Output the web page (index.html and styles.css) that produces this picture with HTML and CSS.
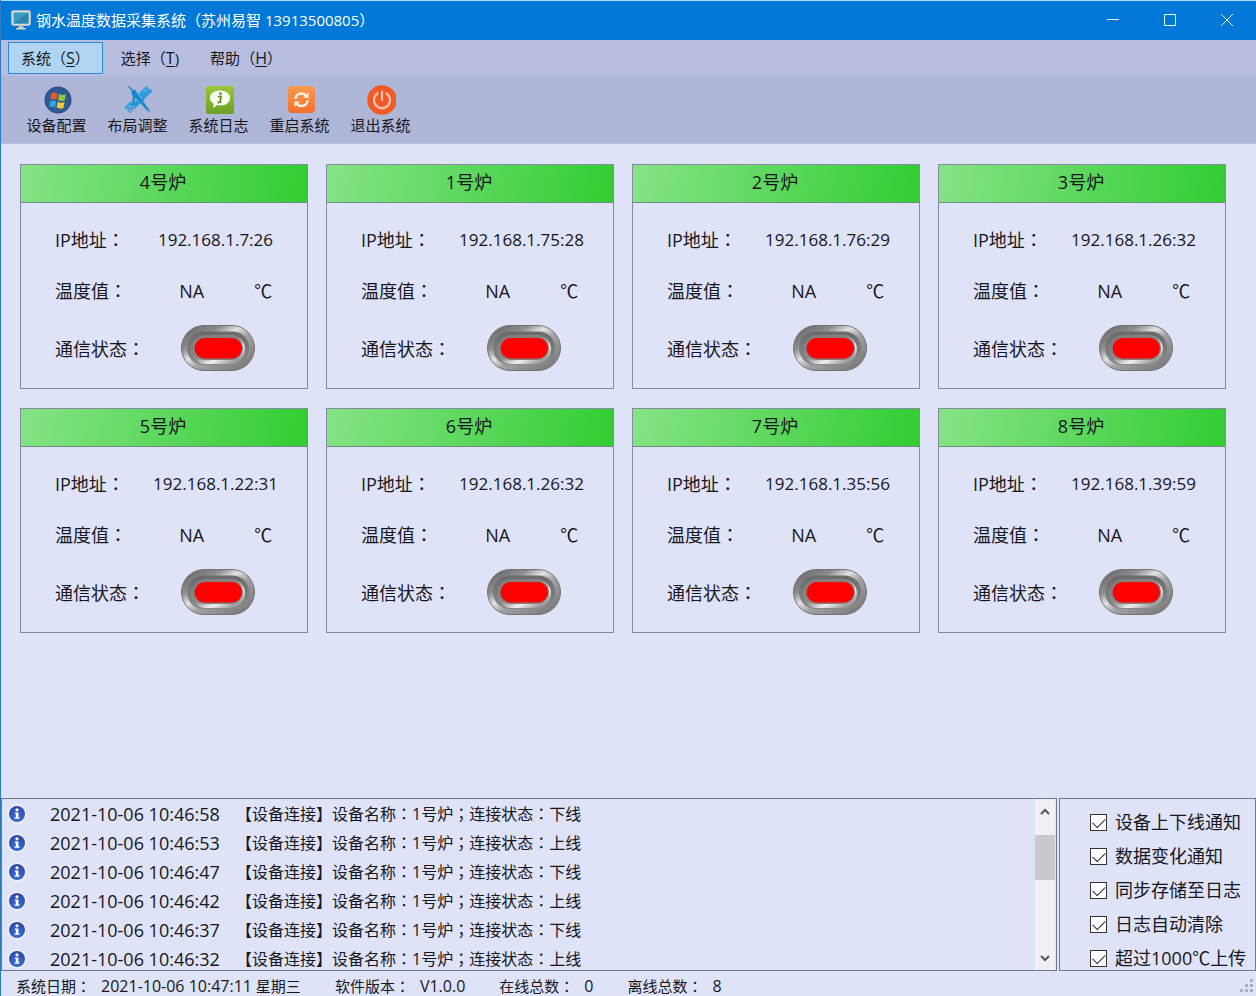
FILE: index.html
```html
<!DOCTYPE html>
<html lang="zh-CN">
<head>
<meta charset="utf-8">
<meta name="viewport" content="width=device-width, initial-scale=1">
<title>钢水温度数据采集系统</title>
<link rel="stylesheet" href="styles.css">
</head>
<body>
<svg class="defs" aria-hidden="true">
  <defs>
    <linearGradient id="rim" x1="0" y1="0" x2="1" y2="1">
      <stop offset="0" stop-color="#5c5c5c"/><stop offset="0.28" stop-color="#8e8e8e"/><stop offset="0.42" stop-color="#e2e2e2"/><stop offset="0.56" stop-color="#a2a2a2"/><stop offset="1" stop-color="#707070"/>
    </linearGradient>
    <linearGradient id="well" x1="0" y1="0" x2="0" y2="1">
      <stop offset="0" stop-color="#6a6a6a"/><stop offset="1" stop-color="#8a8a8a"/>
    </linearGradient>
    <linearGradient id="bevel" x1="0" y1="0" x2="1" y2="1">
      <stop offset="0" stop-color="#777"/><stop offset="0.45" stop-color="#8c8c8c"/><stop offset="0.66" stop-color="#f0f0f0"/><stop offset="0.85" stop-color="#a0a0a0"/><stop offset="1" stop-color="#777"/>
    </linearGradient>
    <linearGradient id="green" x1="0" y1="0" x2="0" y2="1">
      <stop offset="0" stop-color="#9ac93c"/><stop offset="1" stop-color="#6ba024"/>
    </linearGradient>
    <linearGradient id="orange" x1="0" y1="0" x2="0" y2="1">
      <stop offset="0" stop-color="#fb9a52"/><stop offset="1" stop-color="#f3702c"/>
    </linearGradient>
    <radialGradient id="blue" cx="0.5" cy="0.75" r="0.7">
      <stop offset="0" stop-color="#3a72dc"/><stop offset="1" stop-color="#3048a4"/>
    </radialGradient>
  </defs>
  <symbol id="led" viewBox="0 0 74 46">
    <rect x="0.5" y="0.5" width="73" height="45" rx="22.5" fill="url(#rim)" stroke="#747474"/>
    <rect x="6" y="6.5" width="62" height="33.5" rx="16.5" fill="url(#well)"/>
    <rect x="10" y="10" width="54" height="29" rx="14.5" fill="url(#bevel)"/>
    <rect x="12" y="11" width="50" height="24" rx="12" fill="#858080"/>
    <rect x="13.5" y="13" width="47.5" height="20.5" rx="10.2" fill="#fe0000"/>
  </symbol>
  <symbol id="info" viewBox="0 0 20 20">
    <circle cx="10" cy="10" r="9.5" fill="#f2f5fd"/>
    <circle cx="10" cy="10" r="8" fill="url(#blue)"/>
    <circle cx="10" cy="5.8" r="1.6" fill="#fff"/>
    <path d="M7.8 8.5h3.6v5h1.1v1.3H7.6v-1.3h1.2V9.8H7.8z" fill="#fff"/>
  </symbol>
</svg>

<header class="titlebar">
  <svg class="app-icon" viewBox="0 0 20 20" aria-hidden="true">
    <rect x="0.5" y="0.5" width="19" height="15" rx="2" fill="#d3dadd" stroke="#aebbc3"/>
    <rect x="2.5" y="2.5" width="15" height="11" fill="#3c9bc4"/>
    <path d="M2.5 13.500 17.5 2.500v11z" fill="#2d86b0"/>
    <path d="M8 16h4l1 2H7z" fill="#c9c2a8"/><rect x="5" y="18" width="10" height="1.600" rx="0.8" fill="#dedac8"/>
  </svg>
  <h1 class="title">钢水温度数据采集系统<span class="pn">（</span>苏州易智 13913500805<span class="pn">）</span></h1>
  <div class="window-buttons">
    <button type="button" aria-label="最小化"><svg viewBox="0 0 12 12"><path d="M0 5.500h12"/></svg></button>
    <button type="button" aria-label="最大化"><svg viewBox="0 0 12 12"><path d="M0.500 0.500h11v11h-11z"/></svg></button>
    <button type="button" aria-label="关闭"><svg viewBox="0 0 12 12"><path d="M0 0l12 12M12 0L0 12"/></svg></button>
  </div>
</header>

<nav class="menu">
  <button type="button" class="active">系统<span class="pn">（</span><u>S</u><span class="pn">）</span></button>
  <button type="button">选择<span class="pn">（</span><u>T</u>)</button>
  <button type="button">帮助<span class="pn">（</span><u>H</u><span class="pn">）</span></button>
</nav>

<div class="toolbar" role="toolbar">
  <button type="button">
    <svg viewBox="0 0 30 30" aria-hidden="true">
      <circle cx="16" cy="15" r="13.500" fill="#2b4f86"/><circle cx="16" cy="15" r="12" fill="#2d5c94"/>
      <path d="M9.500 8.300c2.200-1 4.200-.9 6 .3l-1 6.200c-1.900-1-3.900-1.100-6-.2z" fill="#ef5a2c"/>
      <path d="M17 9c2.300 1.200 4.500 1.100 7 .2l-1.200 6.300c-2.300.8-4.500.7-6.800-.4z" fill="#8cc63c"/>
      <path d="M8.200 16.200c2.200-.9 4.100-.7 6 .2l-1 5.800c-1.900-1-3.800-1-6-.2z" fill="#2fa5dd"/>
      <path d="M15.700 16.800c2.300 1 4.500 1.100 6.900.3l-1.200 6c-2.300.9-4.400.6-6.700-.5z" fill="#fcc630"/>
    </svg>
    <span>设备配置</span>
  </button>
  <button type="button">
    <svg viewBox="0 0 30 30" aria-hidden="true">
      <path d="M1.300 22.500 23.500 0.800l6 5.300L7 28.500z" fill="#2e9bdf"/>
      <path d="M21 4.500l2.500 2.500M24 2.500l2 2M8 18l3 3M5.500 20.500l2 2M3.500 23l2.500 2.500" stroke="#a9cdea" stroke-width="1"/>
      <path d="M4 1l2-.5 3.500 3.800 3.300.5 2.500 4.200 11 15.500 1.500 3.700-3.500-2.200L12.500 13.500 8.500 28l-1.500.8L9.500 11.500 8 8.500l.2-2.500z" fill="#1788cc" stroke="#aeb8db" stroke-width="0.800"/>
      <path d="M8 19.500c5-.3 9-2 13-5" fill="none" stroke="#1e90d2" stroke-width="2"/>
    </svg>
    <span>布局调整</span>
  </button>
  <button type="button">
    <svg viewBox="0 0 30 30" aria-hidden="true">
      <rect x="2" y="1" width="28" height="28" rx="2" fill="url(#green)"/>
      <path d="M16 5.500c5.800 0 10 3 10 7.500s-4 7.500-9.500 7.500c-1.200 0-2.300-.1-3.200-.4L9 23l.8-4.200C7.300 17.400 6 15.400 6 13c0-4.500 4.200-7.500 10-7.500z" fill="#f8fbef"/>
      <circle cx="16.500" cy="8.700" r="1.400" fill="#67932f"/>
      <path d="M13.800 11.700h3.300l-1.200 5.300h1.500M13.500 17.500h2" fill="none" stroke="#67932f" stroke-width="1.800"/>
    </svg>
    <span>系统日志</span>
  </button>
  <button type="button">
    <svg viewBox="0 0 30 30" aria-hidden="true">
      <rect x="3" y="1" width="27" height="27" rx="4" fill="url(#orange)"/>
      <path d="M10.500 14c.3-3.500 3-5.500 6-5.500 2 0 3.700.8 4.700 2.200M22.500 15.500c-.3 3.500-3 5.500-6 5.500-2 0-3.700-.8-4.700-2.200" fill="none" stroke="#fff3e5" stroke-width="2.500"/>
      <path d="M23.500 7.500V13H18zM9.500 22v-5.500H15z" fill="#fff3e5"/>
    </svg>
    <span>重启系统</span>
  </button>
  <button type="button">
    <svg viewBox="0 0 30 30" aria-hidden="true">
      <circle cx="16" cy="15" r="14.800" fill="#f15a24"/>
      <path d="M11.500 8.500a8 8 0 1 0 9 0" fill="none" stroke="#f8c3af" stroke-width="2.200" stroke-linecap="round"/>
      <path d="M16 6.500v8.500" stroke="#f8c3af" stroke-width="2.200" stroke-linecap="round"/>
    </svg>
    <span>退出系统</span>
  </button>
</div>

<main class="furnaces">
  <section class="card">
    <h2>4号炉</h2>
    <dl>
      <dt>IP地址<span class="pn">：</span></dt><dd class="wide">192.168.1.7:26</dd>
      <dt>温度值<span class="pn">：</span></dt><dd>NA</dd><dd class="unit">℃</dd>
      <dt>通信状态<span class="pn">：</span></dt><dd class="wide lamp"><svg class="led" role="img" aria-label="离线"><use href="#led"/></svg></dd>
    </dl>
  </section>
  <section class="card">
    <h2>1号炉</h2>
    <dl>
      <dt>IP地址<span class="pn">：</span></dt><dd class="wide">192.168.1.75:28</dd>
      <dt>温度值<span class="pn">：</span></dt><dd>NA</dd><dd class="unit">℃</dd>
      <dt>通信状态<span class="pn">：</span></dt><dd class="wide lamp"><svg class="led" role="img" aria-label="离线"><use href="#led"/></svg></dd>
    </dl>
  </section>
  <section class="card">
    <h2>2号炉</h2>
    <dl>
      <dt>IP地址<span class="pn">：</span></dt><dd class="wide">192.168.1.76:29</dd>
      <dt>温度值<span class="pn">：</span></dt><dd>NA</dd><dd class="unit">℃</dd>
      <dt>通信状态<span class="pn">：</span></dt><dd class="wide lamp"><svg class="led" role="img" aria-label="离线"><use href="#led"/></svg></dd>
    </dl>
  </section>
  <section class="card">
    <h2>3号炉</h2>
    <dl>
      <dt>IP地址<span class="pn">：</span></dt><dd class="wide">192.168.1.26:32</dd>
      <dt>温度值<span class="pn">：</span></dt><dd>NA</dd><dd class="unit">℃</dd>
      <dt>通信状态<span class="pn">：</span></dt><dd class="wide lamp"><svg class="led" role="img" aria-label="离线"><use href="#led"/></svg></dd>
    </dl>
  </section>
  <section class="card">
    <h2>5号炉</h2>
    <dl>
      <dt>IP地址<span class="pn">：</span></dt><dd class="wide">192.168.1.22:31</dd>
      <dt>温度值<span class="pn">：</span></dt><dd>NA</dd><dd class="unit">℃</dd>
      <dt>通信状态<span class="pn">：</span></dt><dd class="wide lamp"><svg class="led" role="img" aria-label="离线"><use href="#led"/></svg></dd>
    </dl>
  </section>
  <section class="card">
    <h2>6号炉</h2>
    <dl>
      <dt>IP地址<span class="pn">：</span></dt><dd class="wide">192.168.1.26:32</dd>
      <dt>温度值<span class="pn">：</span></dt><dd>NA</dd><dd class="unit">℃</dd>
      <dt>通信状态<span class="pn">：</span></dt><dd class="wide lamp"><svg class="led" role="img" aria-label="离线"><use href="#led"/></svg></dd>
    </dl>
  </section>
  <section class="card">
    <h2>7号炉</h2>
    <dl>
      <dt>IP地址<span class="pn">：</span></dt><dd class="wide">192.168.1.35:56</dd>
      <dt>温度值<span class="pn">：</span></dt><dd>NA</dd><dd class="unit">℃</dd>
      <dt>通信状态<span class="pn">：</span></dt><dd class="wide lamp"><svg class="led" role="img" aria-label="离线"><use href="#led"/></svg></dd>
    </dl>
  </section>
  <section class="card">
    <h2>8号炉</h2>
    <dl>
      <dt>IP地址<span class="pn">：</span></dt><dd class="wide">192.168.1.39:59</dd>
      <dt>温度值<span class="pn">：</span></dt><dd>NA</dd><dd class="unit">℃</dd>
      <dt>通信状态<span class="pn">：</span></dt><dd class="wide lamp"><svg class="led" role="img" aria-label="离线"><use href="#led"/></svg></dd>
    </dl>
  </section>
</main>

<div class="bottom">
  <div class="log">
    <ul>
      <li><svg aria-hidden="true"><use href="#info"/></svg><time>2021-10-06 10:46:58</time><span>【设备连接】设备名称<span class="pn">：</span>1号炉<span class="pn">；</span>连接状态<span class="pn">：</span>下线</span></li>
      <li><svg aria-hidden="true"><use href="#info"/></svg><time>2021-10-06 10:46:53</time><span>【设备连接】设备名称<span class="pn">：</span>1号炉<span class="pn">；</span>连接状态<span class="pn">：</span>上线</span></li>
      <li><svg aria-hidden="true"><use href="#info"/></svg><time>2021-10-06 10:46:47</time><span>【设备连接】设备名称<span class="pn">：</span>1号炉<span class="pn">；</span>连接状态<span class="pn">：</span>下线</span></li>
      <li><svg aria-hidden="true"><use href="#info"/></svg><time>2021-10-06 10:46:42</time><span>【设备连接】设备名称<span class="pn">：</span>1号炉<span class="pn">；</span>连接状态<span class="pn">：</span>上线</span></li>
      <li><svg aria-hidden="true"><use href="#info"/></svg><time>2021-10-06 10:46:37</time><span>【设备连接】设备名称<span class="pn">：</span>1号炉<span class="pn">；</span>连接状态<span class="pn">：</span>下线</span></li>
      <li><svg aria-hidden="true"><use href="#info"/></svg><time>2021-10-06 10:46:32</time><span>【设备连接】设备名称<span class="pn">：</span>1号炉<span class="pn">；</span>连接状态<span class="pn">：</span>上线</span></li>
    </ul>
    <div class="scrollbar">
      <button type="button" aria-label="向上滚动"><svg viewBox="0 0 10 7"><path d="M1 6l4-4 4 4"/></svg></button>
      <div class="track"><div class="thumb"></div></div>
      <button type="button" aria-label="向下滚动"><svg viewBox="0 0 10 7"><path d="M1 1l4 4 4-4"/></svg></button>
    </div>
  </div>
  <form class="options">
    <label><input type="checkbox" checked><span>设备上下线通知</span></label>
    <label><input type="checkbox" checked><span>数据变化通知</span></label>
    <label><input type="checkbox" checked><span>同步存储至日志</span></label>
    <label><input type="checkbox" checked><span>日志自动清除</span></label>
    <label><input type="checkbox" checked><span>超过1000℃上传</span></label>
  </form>
</div>

<footer class="status">
  <div><span>系统日期<span class="pn">：</span></span><span><span class="num">2021-10-06 10:47:11</span> 星期三</span></div>
  <div><span>软件版本<span class="pn">：</span></span><span class="num">V1.0.0</span></div>
  <div><span>在线总数<span class="pn">：</span></span><span class="num">0</span></div>
  <div><span>离线总数<span class="pn">：</span></span><span class="num">8</span></div>
  <svg class="grip" viewBox="0 0 14 14" aria-hidden="true">
    <path d="M11 0h3v3h-3zM6 5h3v3H6zM11 5h3v3h-3zM1 10h3v3H1zM6 10h3v3H6zM11 10h3v3h-3z" fill="#a9adbd"/>
  </svg>
</footer>
</body>
</html>
```

FILE: styles.css
```css
* {
  box-sizing: border-box;
}

body {
  margin: 0;
  min-height: 100vh;
  display: flex;
  flex-direction: column;
  background: #dfe3f7;
  border-left: 1px solid #2f7cc0;
  color: #16161c;
  font-family: "Open Sans", "Noto Sans CJK SC", sans-serif;
  font-size: 15px;
  line-height: 20px;
}

button {
  margin: 0;
  padding: 0;
  border: 0;
  background: none;
  color: inherit;
  font: inherit;
}

.defs {
  position: absolute;
  width: 0;
  height: 0;
}

/* Full-width punctuation centred in its cell */
.pn {
  font-family: "Noto Sans CJK TC", sans-serif;
  -webkit-locale: "zh-TW";
}

.titlebar {
  display: flex;
  align-items: center;
  height: 40px;
  padding: 0 1px 2px 10px;
  background: #0078d7;
  border-top: 1px solid #a5dcf2;
  color: #fff;
}

.app-icon {
  width: 20px;
  height: 20px;
  margin-right: 5px;
}

.title {
  flex: 1;
  margin: 0;
  font-size: 15px;
  font-weight: 400;
}

.window-buttons {
  display: flex;
  align-self: stretch;
}

.window-buttons button {
  width: 57px;
}

.window-buttons svg {
  display: block;
  width: 12px;
  height: 12px;
  margin: 0 auto;
  fill: none;
  stroke: #e4f7ff;
}

.menu {
  display: flex;
  gap: 5px;
  height: 36px;
  padding: 2px 7px;
  background: #b7bee0;
}

.menu button {
  height: 32px;
  padding: 0 12px;
  border: 1px solid transparent;
  white-space: nowrap;
}

.menu .active {
  background: #b0d5f3;
  border-color: #3089d8;
}

.menu u {
  font-size: 16px;
  text-underline-offset: 2px;
}

.toolbar {
  display: flex;
  height: 68px;
  padding: 9px 15px 0;
  background: #afb7d9;
  border-bottom: 1px solid #bcc3e2;
}

.toolbar button {
  display: flex;
  flex-direction: column;
  align-items: center;
  width: 81px;
  height: 50px;
}

.toolbar svg {
  width: 30px;
  height: 30px;
}

.furnaces {
  flex: 1;
  display: grid;
  grid-template-columns: repeat(4, 1fr);
  align-content: start;
  gap: 19px 18px;
  padding: 20px 30px 20px 19px;
}

.card {
  border: 1px solid #858aa2;
}

.card h2 {
  margin: 0;
  height: 38px;
  padding-right: 2px;
  border-bottom: 1px solid #6c8c80;
  background: linear-gradient(100deg, #86e386, #32cd32);
  font-size: 18px;
  font-weight: 400;
  line-height: 35px;
  text-align: center;
}

.card dl {
  display: grid;
  grid-template-columns: 101px minmax(0, 1fr) minmax(0, 1fr);
  grid-template-rows: 51px 51px 64px;
  align-items: center;
  margin: 0;
  padding: 11px 8px 8px 34px;
}

.card dt {
  grid-column: 1;
  font-size: 18px;
  white-space: nowrap;
}

.card dd {
  margin: 0;
  font-size: 18px;
  text-align: center;
}

.card .wide {
  grid-column: 2 / 4;
  margin-left: -8px;
  padding-right: 16px;
  font-size: 17px;
}

.card .lamp {
  padding-right: 12px;
}

.led {
  display: block;
  width: 74px;
  height: 46px;
  margin: 0 auto;
}

.bottom {
  display: flex;
  gap: 2px;
  height: 173px;
}

.log {
  flex: 1;
  display: flex;
  overflow: hidden;
  border: 1px solid #74788c;
  padding-right: 1px;
}

.log ul {
  flex: 1;
  margin: 0;
  padding: 0 0 0 5px;
  list-style: none;
}

.log li {
  display: flex;
  align-items: center;
  height: 29px;
  font-size: 16px;
  white-space: nowrap;
}

.log li svg {
  width: 20px;
  height: 20px;
}

.log time {
  width: 186px;
  margin-left: 23px;
  font-size: 18px;
}

.scrollbar {
  display: flex;
  flex-direction: column;
  width: 20px;
  background: #f0f0f2;
}

.scrollbar button {
  height: 24px;
}

.scrollbar svg {
  display: block;
  width: 10px;
  height: 7px;
  margin: 0 auto;
  fill: none;
  stroke: #55565c;
  stroke-width: 2;
}

.track {
  flex: 1;
  padding-top: 12px;
}

.thumb {
  height: 45px;
  background: #c9c9cb;
}

.options {
  width: 197px;
  padding: 6px 0 0 30px;
  overflow: hidden;
  border: 1px solid #74788c;
}

.options label {
  display: flex;
  align-items: center;
  gap: 8px;
  height: 34px;
  font-size: 18px;
  white-space: nowrap;
}

.options input {
  appearance: none;
  flex: none;
  width: 17px;
  height: 17px;
  margin: 0;
  border: 1px solid #333;
  background: #fff;
}

.options input:checked::before {
  content: "";
  display: block;
  width: 11px;
  height: 6px;
  margin: 3px 2px;
  border: solid #333;
  border-width: 0 0 1px 1px;
  transform: rotate(-45deg);
}

.status {
  display: flex;
  align-items: center;
  gap: 34px;
  height: 25px;
  padding: 4px 3px 0 15px;
  white-space: nowrap;
}

.status div {
  display: flex;
  gap: 10px;
}

.status .num {
  font-size: 16px;
}

.grip {
  width: 14px;
  height: 14px;
  margin-left: auto;
}
```
